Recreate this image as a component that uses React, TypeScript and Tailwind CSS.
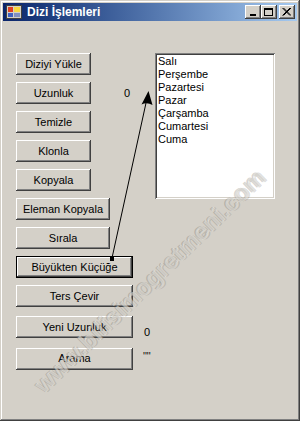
import React from "react";

const font = { fontFamily: '"Liberation Sans", Arial, sans-serif' };

function Btn({ w, label, def }: { w: string; label: string; def?: boolean }) {
  return (
    <div
      className={`${w} h-[22px] flex-none flex items-center justify-center text-[11px] text-black bg-[#d4d0c8] ${
        def
          ? "shadow-[inset_0_0_0_1px_#000,inset_-2px_-2px_#404040,inset_2px_2px_#ffffff,inset_-3px_-3px_#808080]"
          : "shadow-[inset_-1px_-1px_#404040,inset_1px_1px_#ffffff,inset_-2px_-2px_#808080]"
      }`}
    >
      {label}
    </div>
  );
}

function CapBtn({ children, extra }: { children: React.ReactNode; extra?: string }) {
  return (
    <div
      className={`w-[16px] h-[14px] bg-[#d4d0c8] flex items-center justify-center shadow-[inset_-1px_-1px_#404040,inset_1px_1px_#ffffff,inset_-2px_-2px_#808080] ${extra ?? ""}`}
    >
      {children}
    </div>
  );
}

export default function App() {
  const items = ["Salı", "Perşembe", "Pazartesi", "Pazar", "Çarşamba", "Cumartesi", "Cuma"];
  return (
    <div
      className="w-[300px] h-[421px] bg-[#d4d0c8] relative overflow-hidden p-[3px] shadow-[inset_-1px_-1px_#404040,inset_1px_1px_#d4d0c8,inset_-2px_-2px_#808080,inset_2px_2px_#ffffff]"
      style={font}
    >
      {/* title bar */}
      <div className="h-[18px] flex items-center bg-gradient-to-r from-[#0a246a] to-[#a6caf0] pl-[3px] pr-[2px]">
        <svg width="16" height="16" viewBox="0 0 16 16" className="flex-none">
          <rect x="0.5" y="1.5" width="15" height="13" fill="#d4d0c8" stroke="#404040" />
          <rect x="2" y="3" width="5" height="5" fill="#e04020" />
          <rect x="8" y="3" width="6" height="5" fill="#f8d840" />
          <rect x="2" y="9" width="5" height="4" fill="#4060c0" />
          <rect x="8" y="9" width="6" height="4" fill="#8090c0" />
        </svg>
        <span className="ml-[5px] text-[12px] font-bold text-white leading-none">Dizi İşlemleri</span>
        <div className="ml-auto flex items-center">
          <CapBtn>
            <div className="w-[6px] h-[2px] bg-black mt-[6px] -ml-[1px]" />
          </CapBtn>
          <CapBtn>
            <div className="w-[9px] h-[8px] border border-black border-t-2 -ml-[1px]" />
          </CapBtn>
          <CapBtn extra="ml-[2px]">
            <svg width="9" height="8" viewBox="0 0 9 8" className="-ml-[1px]">
              <path d="M0.5 0 L8 7.5 M1.5 0 L9 7.5 M8 0 L0.5 7.5 M9 0 L1.5 7.5" stroke="#000" strokeWidth="1" />
            </svg>
          </CapBtn>
        </div>
      </div>

      {/* client */}
      <div className="flex pt-[32px] pl-[13px]">
        <div className="w-[139px] flex-none flex flex-col gap-[7px]">
          <Btn w="w-[75px]" label="Diziyi Yükle" />
          <div className="flex items-center">
            <Btn w="w-[75px]" label="Uzunluk" />
            <span className="ml-[33px] text-[11px] text-black">0</span>
          </div>
          <Btn w="w-[75px]" label="Temizle" />
          <Btn w="w-[75px]" label="Klonla" />
          <Btn w="w-[75px]" label="Kopyala" />
          <Btn w="w-[94px]" label="Eleman Kopyala" />
          <Btn w="w-[94px]" label="Sırala" />
          <Btn w="w-[117px]" label="Büyükten Küçüğe" def />
          <Btn w="w-[117px]" label="Ters Çevir" />
          <div className="flex items-center">
            <Btn w="w-[117px]" label="Yeni Uzunluk" />
            <span className="ml-[11px] mt-[10px] text-[11px] text-black">0</span>
          </div>
          <div className="flex items-center">
            <Btn w="w-[117px]" label="Arama" />
            <span className="ml-[10px] -mt-[4px] text-[10px] text-black leading-none">''''</span>
          </div>
        </div>
        <div className="w-[120px] h-[146px] flex-none bg-white shadow-[inset_1px_1px_#808080,inset_-1px_-1px_#ffffff,inset_2px_2px_#404040,inset_-2px_-2px_#d4d0c8] pt-[2px] pl-[3px]">
          {items.map((t) => (
            <div key={t} className="text-[11px] leading-[13px] text-black">
              {t}
            </div>
          ))}
        </div>
      </div>

      {/* watermark */}
      <div
        className="absolute left-[150px] top-[281px] pointer-events-none whitespace-nowrap text-[24px] font-bold text-[rgba(235,233,228,0.55)] [text-shadow:-1px_-1px_0_rgba(110,105,95,0.28),1px_1px_0_rgba(110,105,95,0.22)]"
        style={{ transform: "translate(-50%,-50%) rotate(-44deg)" }}
      >
        www.bilisimogretmeni.com
      </div>

      {/* arrow */}
      <svg className="absolute left-0 top-0 pointer-events-none" width="300" height="421">
        <line x1="112" y1="258" x2="146" y2="103" stroke="#000" strokeWidth="1" />
        <path d="M148.5 91 L152.5 105 Q147 102 141.5 104.5 Z" fill="#000" />
        <rect x="110" y="256" width="4" height="5" fill="#000" />
      </svg>
    </div>
  );
}
